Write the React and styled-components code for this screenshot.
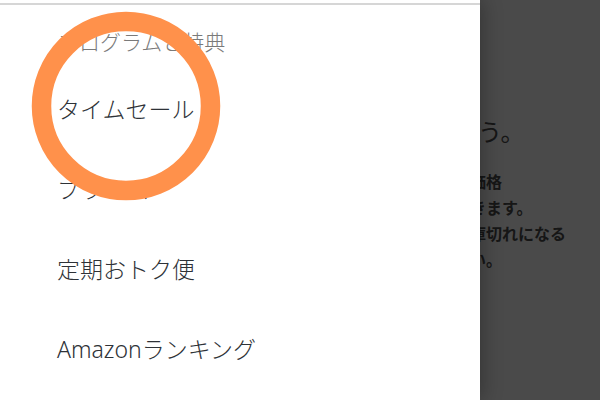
import React from 'react'
import styled, { createGlobalStyle } from 'styled-components'

const GlobalStyle = createGlobalStyle`
  html, body {
    margin: 0;
    padding: 0;
    width: 600px;
    height: 400px;
    overflow: hidden;
    background: #ffffff;
  }
  * {
    box-sizing: border-box;
  }
`

const menuItems = ['タイムセール', 'プライム', '定期おトク便', 'Amazonランキング']

const App = () => {
  return (
    <>
      <GlobalStyle />
      <Screen>
        <Page>
          <PageTitle>ょう。</PageTitle>
          <PageText>
            <div>な価格</div>
            <div>できます。</div>
            <div>在庫切れになる</div>
            <div>さい。</div>
          </PageText>
        </Page>
        <Scrim />
        <Drawer>
          <SectionTitle>プログラムと特典</SectionTitle>
          <Menu>
            {menuItems.map((label) => (
              <MenuItem key={label}>{label}</MenuItem>
            ))}
          </Menu>
          <Highlight width="190" height="190" viewBox="0 0 190 190">
            <circle cx="95" cy="95" r="84.5" fill="none" stroke="#ff914b" strokeWidth="19.5" />
          </Highlight>
        </Drawer>
      </Screen>
    </>
  )
}

const Screen = styled.div`
position: relative;
width: 600px;
height: 400px;
overflow: hidden;
font-family: "Noto Sans", "Noto Sans CJK JP", sans-serif;
`

const Page = styled.div`
width: 600px;
height: 400px;
padding: 116px 0 0 454px;
background: #ffffff;
color: #4e4e4e;
white-space: nowrap;
`

const PageTitle = styled.div`
font-family: "Noto Sans CJK JP", sans-serif;
font-size: 24px;
line-height: 30px;
font-weight: 400;
`

const PageText = styled.div`
margin-top: 22px;
font-family: "Noto Sans CJK JP", sans-serif;
font-size: 16px;
line-height: 26px;
font-weight: 700;
`

const Scrim = styled.div`
position: absolute;
inset: 0;
background: rgba(0, 0, 0, 0.71);
`

const Drawer = styled.nav`
position: absolute;
top: 0;
left: 0;
bottom: 0;
width: 480px;
padding-top: 3px;
background: #ffffff;
box-shadow: 3px 0 18px rgba(0, 0, 0, 0.28);

&::before {
  content: '';
  display: block;
  height: 2px;
  background: #d6d6d6;
}
`

const SectionTitle = styled.div`
padding: 22px 0 11px 58px;
font-size: 21px;
line-height: 30px;
font-weight: 300;
color: #7a7a7a;
`

const Menu = styled.ul`
list-style: none;
margin: 0;
padding: 0;
`

const MenuItem = styled.li`
display: flex;
align-items: center;
height: 80px;
padding-left: 57px;
font-size: 23px;
font-weight: 300;
color: #2e3237;
`

const Highlight = styled.svg`
position: absolute;
left: 31px;
top: 11px;
pointer-events: none;
`

export default App
